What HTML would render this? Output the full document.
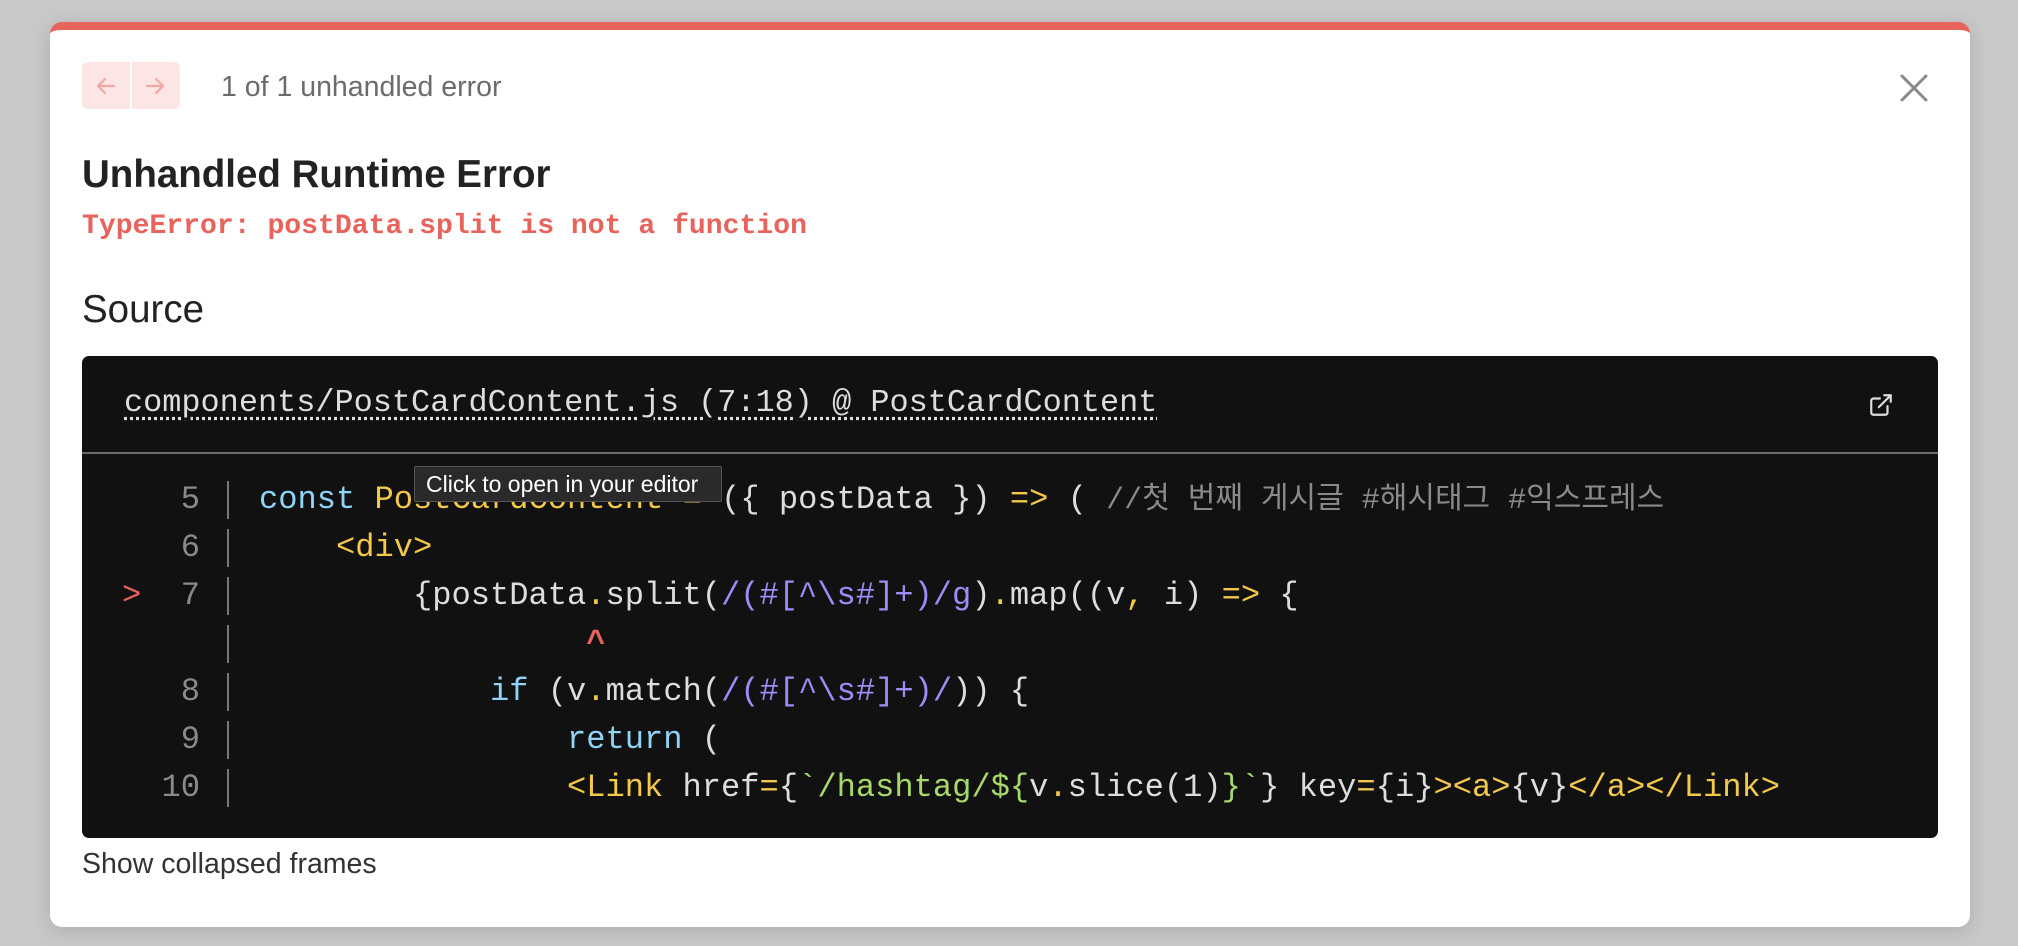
<!DOCTYPE html>
<html><head><meta charset="utf-8"><style>
*{margin:0;padding:0;box-sizing:border-box}
body{width:2018px;height:946px;background:#c9c9c9;position:relative;overflow:hidden;font-family:"Liberation Sans","Noto Sans CJK KR",sans-serif}
.card{position:absolute;left:50px;top:22px;width:1920px;height:905px;background:#fff;border-radius:12px;overflow:hidden;border-top:8px solid #e8635c;box-shadow:0 4px 20px rgba(0,0,0,.15)}
.nav{position:absolute;left:82px;top:62px;width:98px;height:47px;background:#fbe6e5;border-radius:6px}
.nav .sep{position:absolute;left:48px;top:0;width:2px;height:47px;background:#fff}
.nav svg{position:absolute;top:12px}
.t{position:absolute;white-space:pre}
.mono{font-family:"Liberation Mono","DejaVu Sans Mono","Noto Sans CJK KR",monospace}
.code{position:absolute;left:82px;top:356px;width:1856px;height:482px;background:#111;border-radius:7px}
.hr{position:absolute;left:82px;top:452px;width:1856px;height:2px;background:#6a6a6a}
.ln{position:absolute;left:150px;width:50px;text-align:right;color:#8a8a8a;line-height:40px;height:40px}
.pipe{position:absolute;left:227px;width:2px;height:38px;background:#777}
.c{position:absolute;left:259px;white-space:pre;color:#ddd;line-height:40px;height:40px}
.k{color:#8fd3f7}.y{color:#f4c94a}.p{color:#a08af5}.g{color:#a6d96a}.cm{color:#8a8a8a}.r{color:#e8635c}
</style></head><body>
<div class="card"></div>
<div class="nav"><div class="sep"></div>
<svg style="left:12px" width="24" height="24" viewBox="0 0 24 24" fill="none" stroke="#f3a7a2" stroke-width="2.2" stroke-linecap="round" stroke-linejoin="round"><path d="M20 12H4M11 5l-7 7 7 7"/></svg>
<svg style="left:61px" width="24" height="24" viewBox="0 0 24 24" fill="none" stroke="#f3a7a2" stroke-width="2.2" stroke-linecap="round" stroke-linejoin="round"><path d="M4 12h16M13 5l7 7-7 7"/></svg>
</div>
<div class="t" style="left:221px;top:71px;font-size:28.5px;color:#6b6b6b">1 of 1 unhandled error</div>
<svg style="position:absolute;left:1898px;top:72px" width="32" height="32" viewBox="0 0 32 32" stroke="#8a8a8a" stroke-width="3" stroke-linecap="round"><path d="M4 4L28 28M28 4L4 28"/></svg>
<div class="t" style="left:82px;top:153px;font-size:38.5px;font-weight:bold;color:#222">Unhandled Runtime Error</div>
<div class="t mono" style="left:82px;top:211px;font-size:28.1px;font-weight:bold;color:#e8635c">TypeError: postData.split is not a function</div>
<div class="t" style="left:82px;top:288px;font-size:38.5px;color:#222">Source</div>
<div class="code"></div>
<div class="hr"></div>
<div class="t mono" style="left:124px;top:384px;font-size:31.9px;color:#ddd;text-decoration:underline dotted;text-underline-offset:6px">components/PostCardContent.js (7:18) @ PostCardContent</div>
<svg style="position:absolute;left:1868px;top:392px" width="26" height="26" viewBox="0 0 24 24" fill="none" stroke="#ddd" stroke-width="2" stroke-linecap="round" stroke-linejoin="round"><path d="M18 13v6a2 2 0 0 1-2 2H5a2 2 0 0 1-2-2V8a2 2 0 0 1 2-2h6M15 3h6v6M10 14L21 3"/></svg>
<div class="mono" style="font-size:32.1px">
<div class="ln" style="top:480px">5</div><div class="pipe" style="top:481px"></div>
<div class="c" style="top:480px"><span class="k">const</span> <span class="y">PostCardContent</span> <span class="y">=</span> ({ postData }) <span class="y">=&gt;</span> ( <span class="cm" style="font-size:30px">//첫 번째 게시글 #해시태그 #익스프레스</span></div>
<div class="ln" style="top:528px">6</div><div class="pipe" style="top:529px"></div>
<div class="c" style="top:528px">    <span class="y">&lt;div&gt;</span></div>
<div class="t r" style="left:122px;top:576px;line-height:40px">&gt;</div>
<div class="ln" style="top:576px">7</div><div class="pipe" style="top:577px"></div>
<div class="c" style="top:576px">        {postData<span class="y">.</span>split(<span class="p">/(#[^\s#]+)/g</span>)<span class="y">.</span>map((v<span class="y">,</span> i) <span class="y">=&gt;</span> {</div>
<div class="pipe" style="top:625px"></div>
<div class="c r" style="top:624px;font-weight:bold">                 ^</div>
<div class="ln" style="top:672px">8</div><div class="pipe" style="top:673px"></div>
<div class="c" style="top:672px">            <span class="k">if</span> (v<span class="y">.</span>match(<span class="p">/(#[^\s#]+)/</span>)) {</div>
<div class="ln" style="top:720px">9</div><div class="pipe" style="top:721px"></div>
<div class="c" style="top:720px">                <span class="k">return</span> (</div>
<div class="ln" style="top:768px">10</div><div class="pipe" style="top:769px"></div>
<div class="c" style="top:768px">                <span class="y">&lt;Link</span> href<span class="y">=</span>{<span class="g">`/hashtag/${</span>v<span class="y">.</span>slice(1)<span class="g">}`</span>} key<span class="y">=</span>{i}<span class="y">&gt;&lt;a&gt;</span>{v}<span class="y">&lt;/a&gt;&lt;/Link&gt;</span></div>
</div>
<div style="position:absolute;left:414px;top:466px;width:308px;height:36px;background:#2a2a2a;border:1px solid #555;border-radius:2px;color:#fff;font-size:23px;line-height:34px;padding-left:11px;white-space:pre">Click to open in your editor</div>
<div class="t" style="left:82px;top:848px;font-size:28.5px;color:#333">Show collapsed frames</div>
</body></html>
